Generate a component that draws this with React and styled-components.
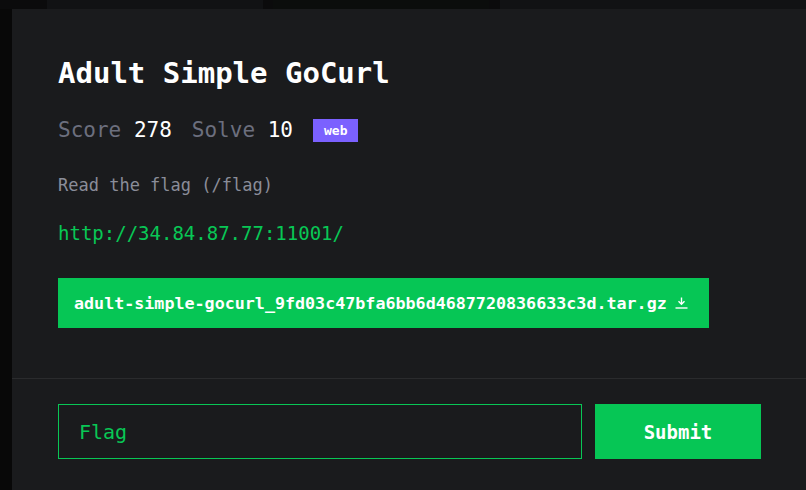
import styled, { createGlobalStyle } from "styled-components";

const GlobalStyle = createGlobalStyle`
  * {
    box-sizing: border-box;
    margin: 0;
    padding: 0;
  }

  body {
    background: #080808;
    font-family: "DejaVu Sans Mono", "Liberation Mono", monospace;
    overflow: hidden;
  }
`;

const backdropTiles = [
  { width: 47, tone: "#0b0b0c" },
  { width: 216, tone: "#111214" },
  { width: 10, tone: "#0b0b0c" },
  { width: 216, tone: "#0b0d0c" },
  { width: 11, tone: "#0b0b0c" },
  { width: 306, tone: "#111214" },
];

const challenge = {
  title: "Adult Simple GoCurl",
  score: 278,
  solves: 10,
  category: "web",
  description: "Read the flag (/flag)",
  url: "http://34.84.87.77:11001/",
  file: "adult-simple-gocurl_9fd03c47bfa6bb6d4687720836633c3d.tar.gz",
};

function DownloadIcon() {
  return (
    <svg width="13" height="12" viewBox="0 0 13 12" fill="none">
      <path d="M6.5 0.5V7" stroke="#fff" strokeWidth="1.4" />
      <path d="M3.5 4.2L6.5 7.2L9.5 4.2" stroke="#fff" strokeWidth="1.4" />
      <path d="M0.5 11H12.5" stroke="#fff" strokeWidth="1.4" />
    </svg>
  );
}

export default function App() {
  return (
    <>
      <GlobalStyle />
      <Page>
        <Backdrop>
          {backdropTiles.map((tile, i) => (
            <Tile key={i} $width={tile.width} $tone={tile.tone} />
          ))}
        </Backdrop>

        <Stage>
          <Modal>
            <Body>
              <Title>{challenge.title}</Title>

              <StatsRow>
                <Stat>
                  <span>Score</span> {challenge.score}
                </Stat>
                <Stat>
                  <span>Solve</span> {challenge.solves}
                </Stat>
                <Badge>{challenge.category}</Badge>
              </StatsRow>

              <Description>{challenge.description}</Description>
              <ServiceLink href={challenge.url}>{challenge.url}</ServiceLink>

              <FileButton>
                <span>{challenge.file}</span>
                <DownloadIcon />
              </FileButton>
            </Body>

            <Footer>
              <FlagInput placeholder="Flag" />
              <SubmitButton>Submit</SubmitButton>
            </Footer>
          </Modal>
        </Stage>
      </Page>
    </>
  );
}

const Page = styled.div`
  width: 806px;
  height: 490px;
  display: flex;
  flex-direction: column;
`;

const Backdrop = styled.div`
  display: flex;
  height: 9px;
  flex-shrink: 0;
`;

const Tile = styled.div`
  width: ${(p) => p.$width}px;
  background: ${(p) => p.$tone};
`;

const Stage = styled.div`
  flex: 1;
  display: flex;
  padding-left: 12px;
  background: #080808;
`;

const Modal = styled.div`
  flex: 1;
  background: #1a1b1d;
  display: flex;
  flex-direction: column;
`;

const Body = styled.div`
  padding: 46px 45px 50px 46px;
  display: flex;
  flex-direction: column;
  align-items: flex-start;
  border-bottom: 1px solid #2a2b2d;
`;

const Title = styled.h1`
  font-size: 29px;
  line-height: 36px;
  font-weight: 700;
  color: #ffffff;
`;

const StatsRow = styled.div`
  margin-top: 27px;
  display: flex;
  align-items: center;
  gap: 20px;
  height: 24px;
`;

const Stat = styled.div`
  font-size: 21px;
  line-height: 24px;
  color: #ffffff;

  span {
    color: #6c6f7e;
  }
`;

const Badge = styled.span`
  height: 23px;
  padding: 0 11px;
  display: inline-flex;
  align-items: center;
  background: #7b61ff;
  color: #ffffff;
  font-size: 13px;
  font-weight: 700;
`;

const Description = styled.p`
  margin-top: 33px;
  font-size: 17px;
  line-height: 20px;
  color: #8a8d99;
`;

const ServiceLink = styled.a`
  margin-top: 27px;
  font-size: 19px;
  line-height: 22px;
  color: #08c755;
  text-decoration: none;
`;

const FileButton = styled.button`
  margin-top: 34px;
  height: 50px;
  padding: 0 21px 0 16px;
  display: flex;
  align-items: center;
  gap: 8px;
  border: none;
  background: #06c655;
  color: #ffffff;
  font-family: inherit;
  font-size: 16.7px;
  font-weight: 700;
  cursor: pointer;
`;

const Footer = styled.div`
  padding: 25px 45px 0 46px;
  display: flex;
  gap: 13px;
`;

const FlagInput = styled.input`
  flex: 1;
  height: 55px;
  padding: 0 20px;
  background: transparent;
  border: 1px solid #08c755;
  color: #08c755;
  font-family: inherit;
  font-size: 20px;
  outline: none;

  &::placeholder {
    color: #08c755;
  }
`;

const SubmitButton = styled.button`
  width: 166px;
  height: 55px;
  border: none;
  background: #06c655;
  color: #ffffff;
  font-family: inherit;
  font-size: 19px;
  font-weight: 700;
  cursor: pointer;
`;
